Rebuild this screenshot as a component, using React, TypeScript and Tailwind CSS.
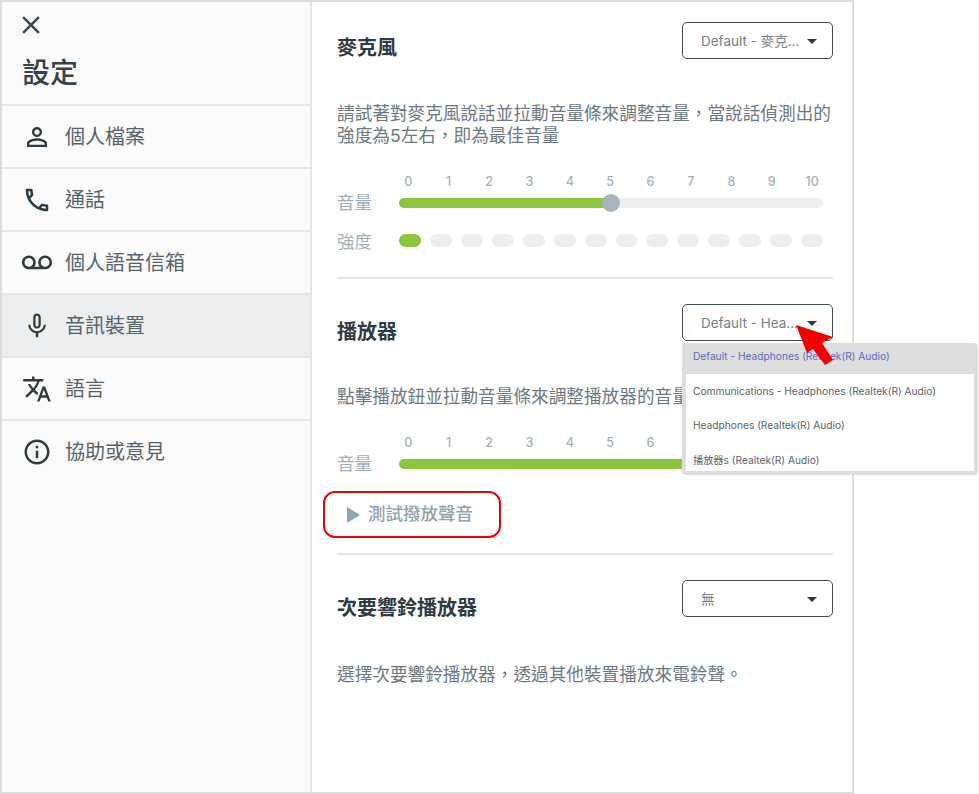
import { ReactNode } from "react";
import {
  MdClose,
  MdInfoOutline,
  MdMicNone,
  MdOutlineLocalPhone,
  MdPersonOutline,
  MdTranslate,
  MdOutlineVoicemail,
} from "react-icons/md";

const navItems = [
  { label: "個人檔案", icon: <MdPersonOutline size={30} /> },
  { label: "通話", icon: <MdOutlineLocalPhone size={30} /> },
  { label: "個人語音信箱", icon: <MdOutlineVoicemail size={30} /> },
  { label: "音訊裝置", icon: <MdMicNone size={30} />, active: true },
  { label: "語言", icon: <MdTranslate size={30} /> },
  { label: "協助或意見", icon: <MdInfoOutline size={30} /> },
];

const levels = [0, 1, 2, 3, 4, 5, 6, 7, 8, 9, 10];
const pills = [0, 1, 2, 3, 4, 5, 6, 7, 8, 9, 10, 11, 12, 13];

function Select(props: { text: string }) {
  return (
    <div className="flex h-[37px] w-[151px] shrink-0 items-center justify-between rounded-[5px] border border-[#3f4e57] bg-white pl-[18px] pr-[15px] text-[13.5px] text-[#74818a]">
      <span className="mt-[1px]">{props.text}</span>
      <svg width="10" height="5" viewBox="0 0 10 5" className="mt-[2px]">
        <polygon points="0,0 10,0 5,5" fill="#2f3b42" />
      </svg>
    </div>
  );
}

function Header(props: { title: string; select: string; titleTop: string }) {
  return (
    <div className="flex items-start justify-between">
      <h2
        className={
          "text-[20px] font-semibold leading-[28px] text-[#2f3b42] " +
          props.titleTop
        }
      >
        {props.title}
      </h2>
      <Select text={props.select} />
    </div>
  );
}

function Volume(props: { percent: number; thumb?: boolean }) {
  return (
    <>
      <div className="ml-[51px] flex h-[17px] items-start">
        {levels.map((n) => (
          <span
            key={n}
            className="w-[40.4px] text-center text-[12.5px] font-medium leading-[16px] text-[#a3b3bd]"
          >
            {n}
          </span>
        ))}
      </div>
      <div className="flex h-[24px] items-center">
        <span className="w-[62px] text-[17.5px] leading-[24px] text-[#9fb0bb]">
          音量
        </span>
        <div className="relative mr-[10px] h-[10px] flex-1 rounded-full bg-[#eceef0]">
          <div
            className="h-full rounded-full bg-[#8cc63f]"
            style={{ width: `${props.percent}%` }}
          />
          {props.thumb && (
            <div className="absolute left-[50%] top-[-4px] h-[18px] w-[18px] -translate-x-[9px] rounded-full bg-[#a5b4be]" />
          )}
        </div>
      </div>
    </>
  );
}

function Desc(props: { children: ReactNode; className?: string }) {
  return (
    <p
      className={
        "text-[17.65px] leading-[22px] text-[#6d7a83] " + (props.className ?? "")
      }
    >
      {props.children}
    </p>
  );
}

export default function App() {
  return (
    <div className="relative h-[794px] w-[979px] overflow-hidden bg-white font-['Inter','Noto_Sans_CJK_TC',sans-serif]">
      <div className="flex h-[794px] w-[854px] border-2 border-[#dcdcdc]">
        {/* sidebar */}
        <aside className="w-[310px] shrink-0 border-r-2 border-[#e6e6e6] bg-[#fbfbfb]">
          <div className="h-[102px] pl-[14px] pt-[8px] text-[#3c4850]">
            <MdClose size={30} />
            <h1 className="ml-[6px] mt-[13px] text-[28px] font-medium leading-[40px] text-[#36424a]">
              設定
            </h1>
          </div>
          {navItems.map((item) => (
            <div
              key={item.label}
              className={
                "flex h-[63px] items-center gap-[13px] border-t-2 border-[#e6e6e6] pl-[20px] " +
                (item.active ? "bg-[#eceef0]" : "")
              }
            >
              <span className="text-[#2f3b42]">{item.icon}</span>
              <span className="text-[20px] text-[#56636c]">{item.label}</span>
            </div>
          ))}
        </aside>

        {/* main panel */}
        <main className="w-[540px] shrink-0 pl-[25px] pr-[19px]">
          <section className="h-[277px] border-b-2 border-[#e6e6e6] pt-[20px]">
            <Header title="麥克風" select="Default - 麥克..." titleTop="mt-[12px]" />
            <Desc className="mt-[41px]">
              請試著對麥克風說話並拉動音量條來調整音量，當說話偵測出的
              <br />
              強度為5左右，即為最佳音量
            </Desc>
            <div className="mt-[27px]">
              <Volume percent={50} thumb />
            </div>
            <div className="mt-[15px] flex h-[24px] items-center">
              <span className="w-[62px] text-[17.5px] leading-[24px] text-[#9fb0bb]">
                強度
              </span>
              <div className="mr-[10px] -mt-[4px] grid flex-1 grid-cols-14 gap-[9px]">
                {pills.map((n) => (
                  <div
                    key={n}
                    className={
                      "h-[13px] rounded-full " +
                      (n === 0 ? "bg-[#8cc63f]" : "bg-[#eceef0]")
                    }
                  />
                ))}
              </div>
            </div>
          </section>

          <section className="h-[276px] border-b-2 border-[#e6e6e6] pt-[25px]">
            <Header title="播放器" select="Default - Hea..." titleTop="mt-[14px]" />
            <Desc className="mt-[40px] whitespace-nowrap">
              點擊播放鈕並拉動音量條來調整播放器的音量
            </Desc>
            <div className="mt-[27px]">
              <Volume percent={100} />
            </div>
            <button className="-ml-[14px] mt-[15px] flex h-[47px] w-[178px] items-center gap-[8px] rounded-[12px] border-[2.5px] border-[#f00000] pl-[22px] text-[17.5px] font-medium text-[#8fa3b0]">
              <svg width="13" height="16" viewBox="0 0 13 16">
                <polygon points="0,0 13,8 0,16" fill="#8fa3b0" />
              </svg>
              測試撥放聲音
            </button>
          </section>

          <section className="pt-[25px]">
            <Header title="次要響鈴播放器" select="無" titleTop="mt-[14px]" />
            <Desc className="mt-[42px]">
              選擇次要響鈴播放器，透過其他裝置播放來電鈴聲。
            </Desc>
          </section>
        </main>
      </div>

      {/* open dropdown */}
      <div className="absolute left-[682px] top-[343px] h-[132px] w-[296px] overflow-hidden rounded-[4px] border-x-4 border-b-4 border-[#dedede] bg-white text-[10.2px] text-[#59646c]">
        <div className="flex h-[31px] items-center bg-[#dedede] pb-[3px] pl-[7px] text-[#5a69c4]">
          Default - Headphones (Realtek(R) Audio)
        </div>
        <div className="flex h-[34.5px] items-center pl-[7px]">
          Communications - Headphones (Realtek(R) Audio)
        </div>
        <div className="flex h-[34.5px] items-center pl-[7px]">
          Headphones (Realtek(R) Audio)
        </div>
        <div className="flex h-[34.5px] items-center pl-[7px]">
          播放器s (Realtek(R) Audio)
        </div>
      </div>

      {/* annotation arrow */}
      <svg
        className="absolute left-[790px] top-[318px]"
        width="50"
        height="55"
        viewBox="0 0 50 55"
      >
        <polygon
          points="6,7 43,19 32,25 43,42 35,47 23,31 17,35"
          fill="#f00000"
        />
      </svg>
    </div>
  );
}
